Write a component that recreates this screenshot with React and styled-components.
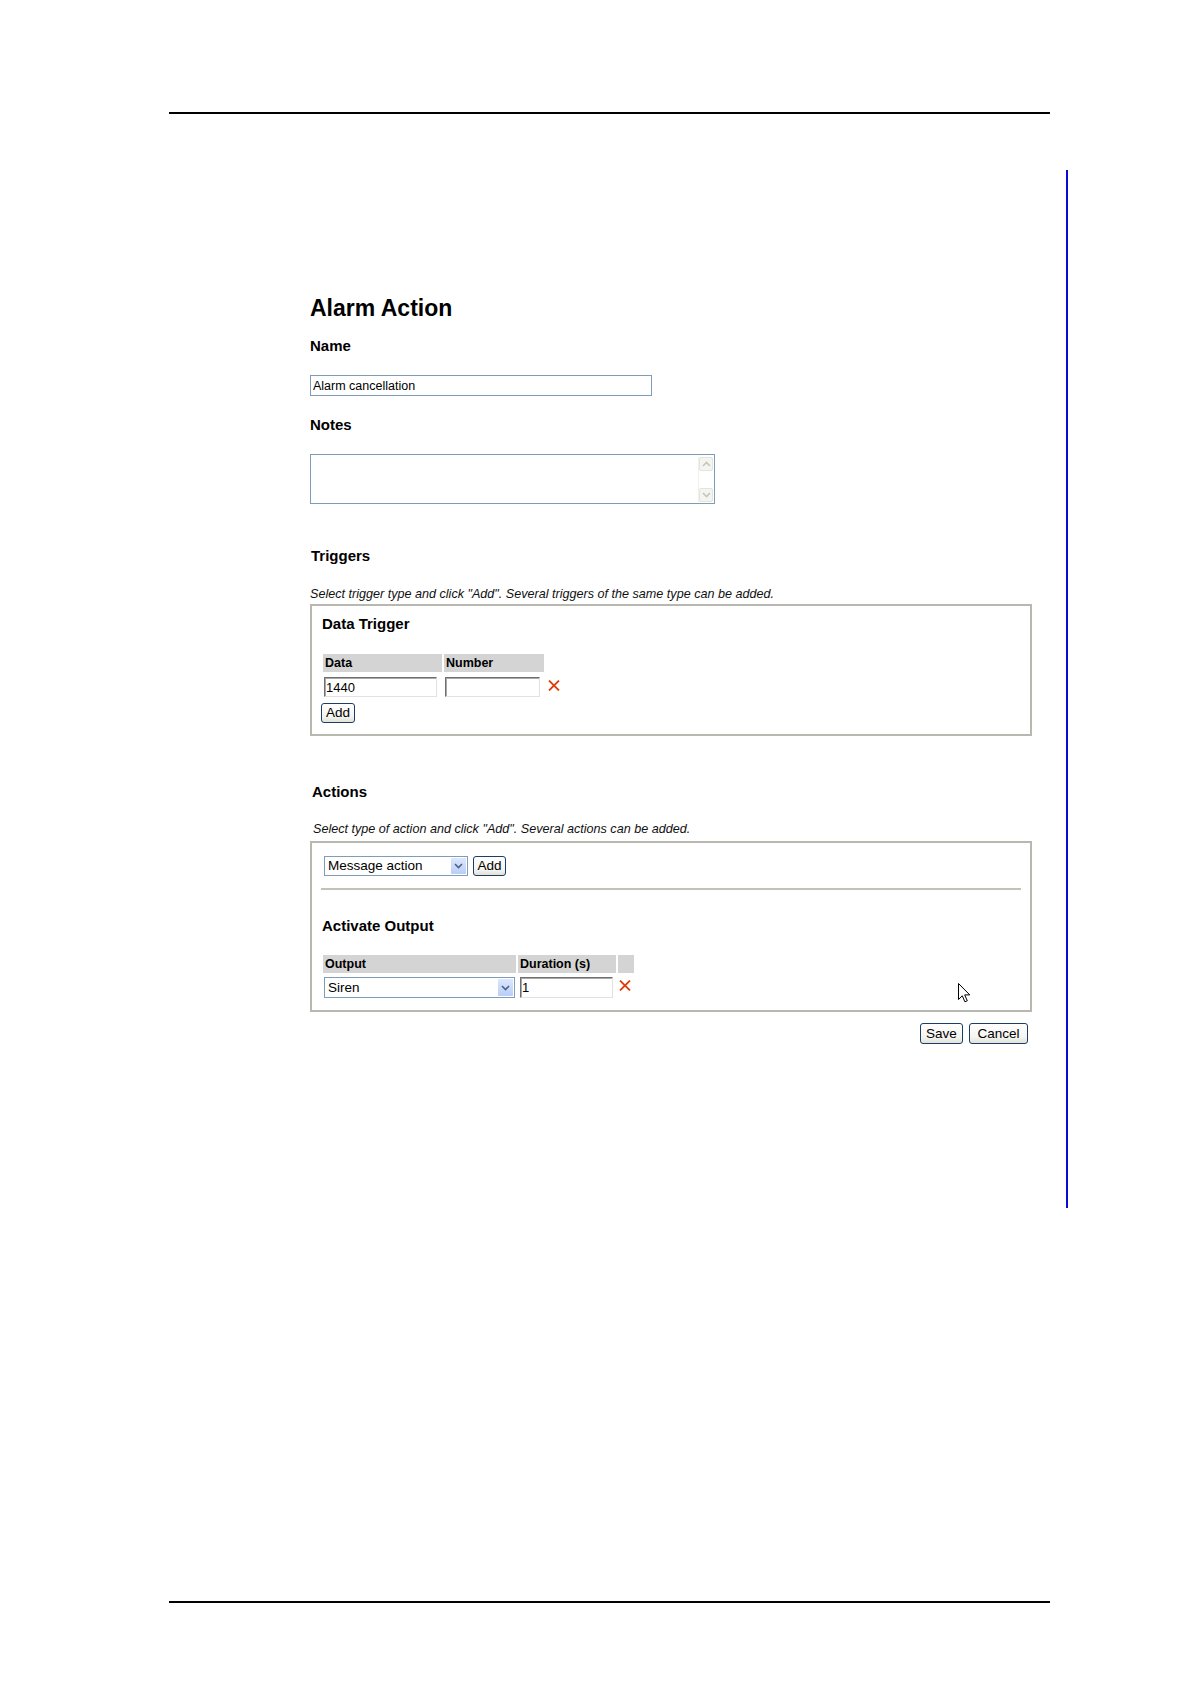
import React from "react";
import styled, { createGlobalStyle } from "styled-components";

const GlobalStyle = createGlobalStyle`
  html, body { margin: 0; padding: 0; background: #fff; }
  body { font-family: "Liberation Sans", Arial, sans-serif; color: #000; }
  * { box-sizing: border-box; }
`;

const Page = styled.div`
  width: 1190px;
  height: 1684px;
  padding-top: 112px;
  overflow: hidden;
  background: #fff;
`;

const Rule = styled.div`
  margin: ${(p) => p.$mt || 0}px 0 0 169px;
  width: 881px;
  height: 2px;
  background: #000;
`;

const ChangeBarArea = styled.div`
  margin: 56px 0 0 169px;
  width: 899px;
  height: 1038px;
  border-right: 2px solid #0a0ad2;
  padding: 125px 0 0 141px;
`;

const Form = styled.div`
  width: 722px;
`;

const Title = styled.h1`
  margin: 0;
  font-size: 23px;
  line-height: 26px;
  font-weight: bold;
`;

const Label = styled.h2`
  margin: ${(p) => p.$mt}px 0 0 ${(p) => p.$indent || 0}px;
  font-size: 15px;
  line-height: 18px;
  font-weight: bold;
`;

const TextField = styled.input`
  display: block;
  margin-top: ${(p) => p.$mt}px;
  width: 342px;
  height: 21px;
  border: 1px solid #7f9db9;
  padding: 0 2px;
  font: 12.5px "Liberation Sans", Arial, sans-serif;
  color: #000;
  background: #fff;
  outline: none;
`;

const NotesBox = styled.div`
  margin-top: ${(p) => p.$mt}px;
  width: 405px;
  height: 50px;
  border: 1px solid #7f9db9;
  display: flex;
  justify-content: flex-end;
  padding: 2px 1px 1px 0;
  background: #fff;
`;

const Scrollbar = styled.div`
  width: 15px;
  display: flex;
  flex-direction: column;
  justify-content: space-between;
  border-left: 1px solid #f0f0ec;
`;

const ScrollBtn = styled.div`
  height: 14px;
  background: #f4f4f0;
  border: 1px solid #e4e4de;
  border-radius: 2px;
  display: flex;
  align-items: center;
  justify-content: center;
`;

const Hint = styled.p`
  margin: ${(p) => p.$mt}px 0 0 ${(p) => p.$indent || 0}px;
  font-style: italic;
  font-size: 12.6px;
  line-height: 14px;
  color: #111;
`;

const GroupBox = styled.div`
  position: relative;
  margin-top: ${(p) => p.$mt}px;
  width: 722px;
  border: 2px solid #b8b8b0;
  padding: ${(p) => p.$pt}px 9px ${(p) => p.$pb}px;
  background: #fff;
`;

const BoxTitle = styled.h3`
  margin: ${(p) => p.$mt || 0}px 0 0 1px;
  font-size: 15px;
  line-height: 18px;
  font-weight: bold;
`;

const FieldTable = styled.table`
  margin-top: ${(p) => p.$mt}px;
  border-collapse: separate;
  border-spacing: 2px;
`;

const HeadCell = styled.th`
  width: ${(p) => p.$w}px;
  height: 18px;
  padding: 0 0 0 2px;
  background: ${(p) => (p.$blank ? "transparent" : "#d4d4d4")};
  text-align: left;
  font-size: 12.5px;
  line-height: 18px;
  font-weight: bold;
  white-space: nowrap;
`;

const Cell = styled.td`
  padding: ${(p) => p.$pt ?? 3}px 0 0 ${(p) => p.$pl ?? 1}px;
  vertical-align: top;
`;

const XCell = styled.td`
  padding: ${(p) => p.$pt}px 0 0 ${(p) => p.$pl}px;
  vertical-align: top;
`;

const InsetInput = styled.input`
  display: block;
  width: ${(p) => p.$w}px;
  height: ${(p) => p.$h || 20}px;
  padding: 0 1px;
  border: 1px solid;
  border-color: #707070 #e2e2e2 #e2e2e2 #707070;
  box-shadow: inset 1px 1px 0 #a8a8a8;
  font: 13px "Liberation Sans", Arial, sans-serif;
  color: #000;
  background: #fff;
  outline: none;
`;

const Button = styled.button`
  width: ${(p) => p.$w}px;
  height: ${(p) => p.$h || 20}px;
  margin-top: ${(p) => p.$mt || 0}px;
  padding: 0;
  border: 1px solid #1c3d64;
  border-radius: 3px;
  background: linear-gradient(#ffffff, #f4f4f0 70%, #e2e2da);
  font: 13.5px "Liberation Sans", Arial, sans-serif;
  color: #000;
  line-height: 18px;
  display: block;
`;

const ActionBar = styled.div`
  display: flex;
  gap: 5px;
  margin-left: 3px;
`;

const SelectBox = styled.div`
  display: flex;
  width: ${(p) => p.$w}px;
  height: ${(p) => p.$h}px;
  border: 1px solid #7f9db9;
  background: #fff;
`;

const SelectText = styled.span`
  flex: 1;
  padding-left: 3px;
  font-size: 13.5px;
  line-height: ${(p) => p.$h - 2}px;
  white-space: nowrap;
`;

const ArrowBtn = styled.span`
  width: 15px;
  margin: 1px;
  background: linear-gradient(#dde7fd, #b9cdf7);
  border-radius: 1px;
  display: flex;
  align-items: center;
  justify-content: center;
`;

const Separator = styled.div`
  margin-top: 12px;
  height: 2px;
  background: #c2c2ba;
`;

const ButtonRow = styled.div`
  display: flex;
  justify-content: flex-end;
  gap: 6px;
  margin-top: 11px;
  padding-right: 4px;
`;

const Pointer = styled.svg`
  position: absolute;
  left: 646px;
  top: 140px;
`;

const Chevron = ({ color = "#4d6185", up = false }) => (
  <svg width="9" height="6" viewBox="0 0 9 6">
    <path
      d={up ? "M1 5 L4.5 1.5 L8 5" : "M1 1 L4.5 4.5 L8 1"}
      fill="none"
      stroke={color}
      strokeWidth="1.6"
    />
  </svg>
);

const XIcon = () => (
  <svg width="12" height="11" viewBox="0 0 12 11">
    <path d="M1 0.5 L11 10.5 M11 0.5 L1 10.5" stroke="#d8420e" strokeWidth="1.8" />
  </svg>
);

const Select = ({ w, h, value }) => (
  <SelectBox $w={w} $h={h}>
    <SelectText $h={h}>{value}</SelectText>
    <ArrowBtn>
      <Chevron />
    </ArrowBtn>
  </SelectBox>
);

export default function App() {
  return (
    <>
      <GlobalStyle />
      <Page>
        <Rule />
        <ChangeBarArea>
          <Form>
            <Title>Alarm Action</Title>
            <Label $mt={16}>Name</Label>
            <TextField $mt={20} value="Alarm cancellation" readOnly />
            <Label $mt={20}>Notes</Label>
            <NotesBox $mt={20}>
              <Scrollbar>
                <ScrollBtn>
                  <Chevron color="#c6c6be" up />
                </ScrollBtn>
                <ScrollBtn>
                  <Chevron color="#c6c6be" />
                </ScrollBtn>
              </Scrollbar>
            </NotesBox>

            <Label $mt={43} $indent={1}>Triggers</Label>
            <Hint $mt={22}>
              Select trigger type and click "Add". Several triggers of the same type can be added.
            </Hint>
            <GroupBox $mt={3} $pt={9} $pb={11}>
              <BoxTitle>Data Trigger</BoxTitle>
              <FieldTable $mt={19}>
                <thead>
                  <tr>
                    <HeadCell $w={119}>Data</HeadCell>
                    <HeadCell $w={100}>Number</HeadCell>
                    <HeadCell $w={16} $blank />
                  </tr>
                </thead>
                <tbody>
                  <tr>
                    <Cell>
                      <InsetInput $w={113} value="1440" readOnly />
                    </Cell>
                    <Cell>
                      <InsetInput $w={95} value="" readOnly />
                    </Cell>
                    <XCell $pt={3} $pl={2}>
                      <XIcon />
                    </XCell>
                  </tr>
                </tbody>
              </FieldTable>
              <Button $w={34} $mt={4}>Add</Button>
            </GroupBox>

            <Label $mt={47} $indent={2}>Actions</Label>
            <Hint $mt={21} $indent={3}>
              Select type of action and click "Add". Several actions can be added.
            </Hint>
            <GroupBox $mt={5} $pt={13} $pb={10}>
              <ActionBar>
                <Select w={144} h={20} value="Message action" />
                <Button $w={33}>Add</Button>
              </ActionBar>
              <Separator />
              <BoxTitle $mt={27}>Activate Output</BoxTitle>
              <FieldTable $mt={18}>
                <thead>
                  <tr>
                    <HeadCell $w={193}>Output</HeadCell>
                    <HeadCell $w={98}>Duration (s)</HeadCell>
                    <HeadCell $w={16} />
                  </tr>
                </thead>
                <tbody>
                  <tr>
                    <Cell $pt={2}>
                      <Select w={191} h={21} value="Siren" />
                    </Cell>
                    <Cell $pt={2} $pl={2}>
                      <InsetInput $w={93} $h={21} value="1" readOnly />
                    </Cell>
                    <XCell $pt={2} $pl={1}>
                      <XIcon />
                    </XCell>
                  </tr>
                </tbody>
              </FieldTable>
              <Pointer width="13" height="20" viewBox="0 0 13 20">
                <path
                  d="M0.5 0.5 L0.5 16.5 L4.3 12.8 L6.9 18.8 L9.3 17.8 L6.7 11.9 L11.8 11.9 Z"
                  fill="#fff"
                  stroke="#000"
                  strokeWidth="1"
                  strokeLinejoin="miter"
                />
              </Pointer>
            </GroupBox>
            <ButtonRow>
              <Button $w={43} $h={21}>Save</Button>
              <Button $w={59} $h={21}>Cancel</Button>
            </ButtonRow>
          </Form>
        </ChangeBarArea>
        <Rule $mt={393} />
      </Page>
    </>
  );
}
